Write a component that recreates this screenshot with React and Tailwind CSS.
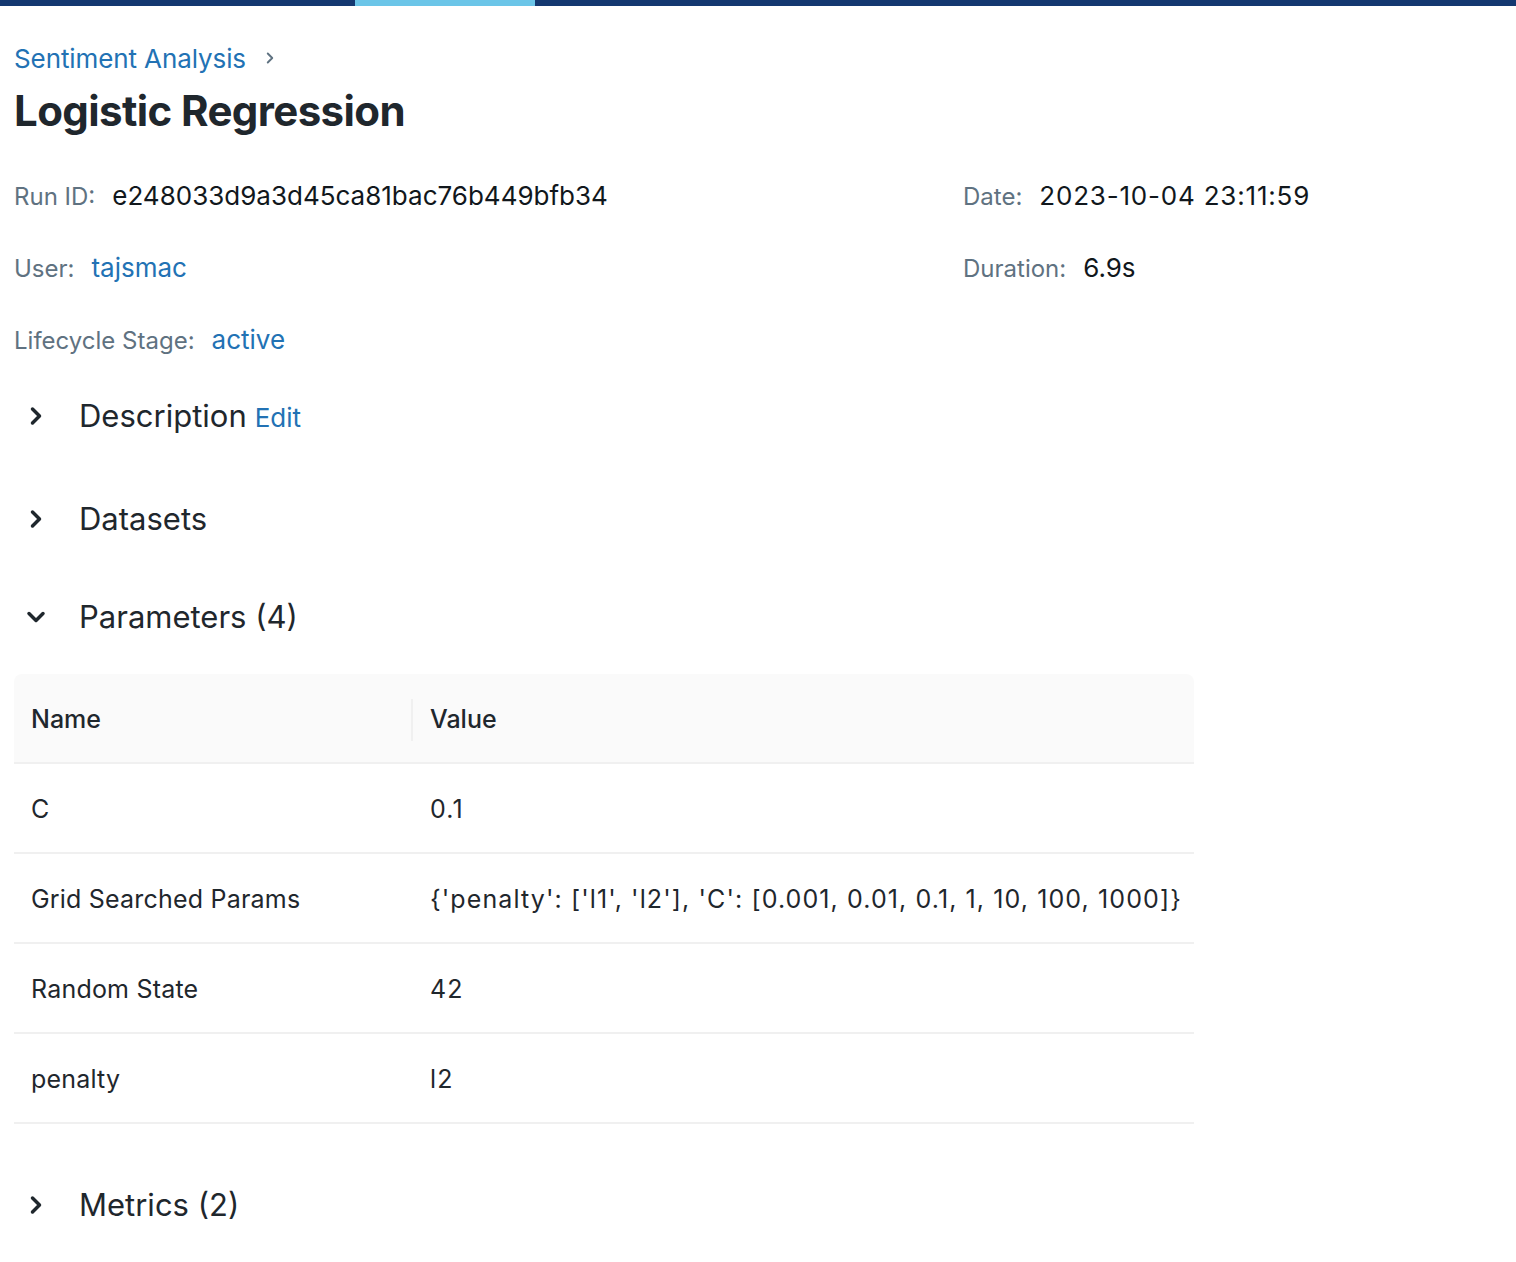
import { ChevronRight, ChevronDown } from 'lucide-react';

const params = [
  { name: 'C', value: '0.1' },
  { name: 'Grid Searched Params', value: "{'penalty': ['l1', 'l2'], 'C': [0.001, 0.01, 0.1, 1, 10, 100, 1000]}" },
  { name: 'Random State', value: '42' },
  { name: 'penalty', value: 'l2' },
];

function Field({ label, children, link, wide }) {
  return (
    <div className="flex items-baseline h-[72px] pt-[14px]">
      <span className="text-[24px] text-[#5f7281] mr-[17px]">{label}</span>
      <span
        className={
          (link ? 'text-[#2272b4] ' : 'text-[#11171c] ') +
          (wide ? 'text-[26px] tracking-[0.8px]' : 'text-[26px]')
        }
      >
        {children}
      </span>
    </div>
  );
}

function Section({ title, open, extra, className }) {
  return (
    <div className={'flex items-center ' + className}>
      <div className="w-[65px] pl-[8px] text-[#1f272d]">
        {open ? <ChevronDown size={28} strokeWidth={3} /> : <ChevronRight size={28} strokeWidth={3} />}
      </div>
      <span className="text-[31px] text-[#1f272d]">{title}</span>
      {extra ? <span className="ml-[8px] text-[26px] text-[#2272b4] mt-[2px]">{extra}</span> : null}
    </div>
  );
}

export default function App() {
  return (
    <div className="min-h-screen bg-white font-['Inter',sans-serif] text-[#11171c]">
      <div className="flex h-[6px]">
        <div className="w-[355px] bg-[#143870]" />
        <div className="w-[180px] bg-[#6bc5e8]" />
        <div className="flex-1 bg-[#143870]" />
      </div>
      <div className="px-[14px]">
        <div className="mt-[36px] flex items-center h-[32px]">
          <span className="text-[26px] text-[#2272b4] tracking-[-0.1px]">Sentiment Analysis</span>
          <ChevronRight size={18} strokeWidth={2.5} className="ml-[15px] text-[#5f7281]" />
        </div>
        <h1 className="mt-[11px] text-[42px] font-bold leading-[52px] tracking-[-0.6px] text-[#1f272d]">Logistic Regression</h1>

        <div className="mt-[25px] grid grid-cols-[949px_1fr]">
          <div>
            <Field label="Run ID:">e248033d9a3d45ca81bac76b449bfb34</Field>
            <Field label="User:" link>tajsmac</Field>
            <Field label="Lifecycle Stage:" link>active</Field>
          </div>
          <div>
            <Field label="Date:" wide>2023-10-04 23:11:59</Field>
            <Field label="Duration:">6.9s</Field>
          </div>
        </div>

        <Section title="Description" extra="Edit" className="mt-[14px] h-[48px]" />
        <Section title="Datasets" className="mt-[55px] h-[48px]" />
        <Section title="Parameters (4)" open className="mt-[50px] h-[48px]" />

        <div className="mt-[33px] w-[1180px]">
          <div className="flex h-[90px] items-center pt-[3px] rounded-t-[8px] bg-[#fafafa] border-b-2 border-[#f0f0f0]">
            <div className="w-[399px] h-[42px] flex items-center pl-[17px] text-[25px] font-medium text-[#1f272d] border-r-2 border-[#f0f0f0]">Name</div>
            <div className="pl-[17px] text-[25px] font-medium text-[#1f272d]">Value</div>
          </div>
          {params.map((p) => (
            <div key={p.name} className="flex h-[90px] items-center pt-[3px] border-b-2 border-[#f0f0f0] text-[25px] text-[#1f272d]">
              <div className="w-[399px] pl-[17px] tracking-[0.2px]">{p.name}</div>
              <div className="pl-[17px] whitespace-nowrap tracking-[1.1px]">{p.value}</div>
            </div>
          ))}
        </div>

        <Section title="Metrics (2)" className="mt-[57px] h-[48px]" />
      </div>
    </div>
  );
}
